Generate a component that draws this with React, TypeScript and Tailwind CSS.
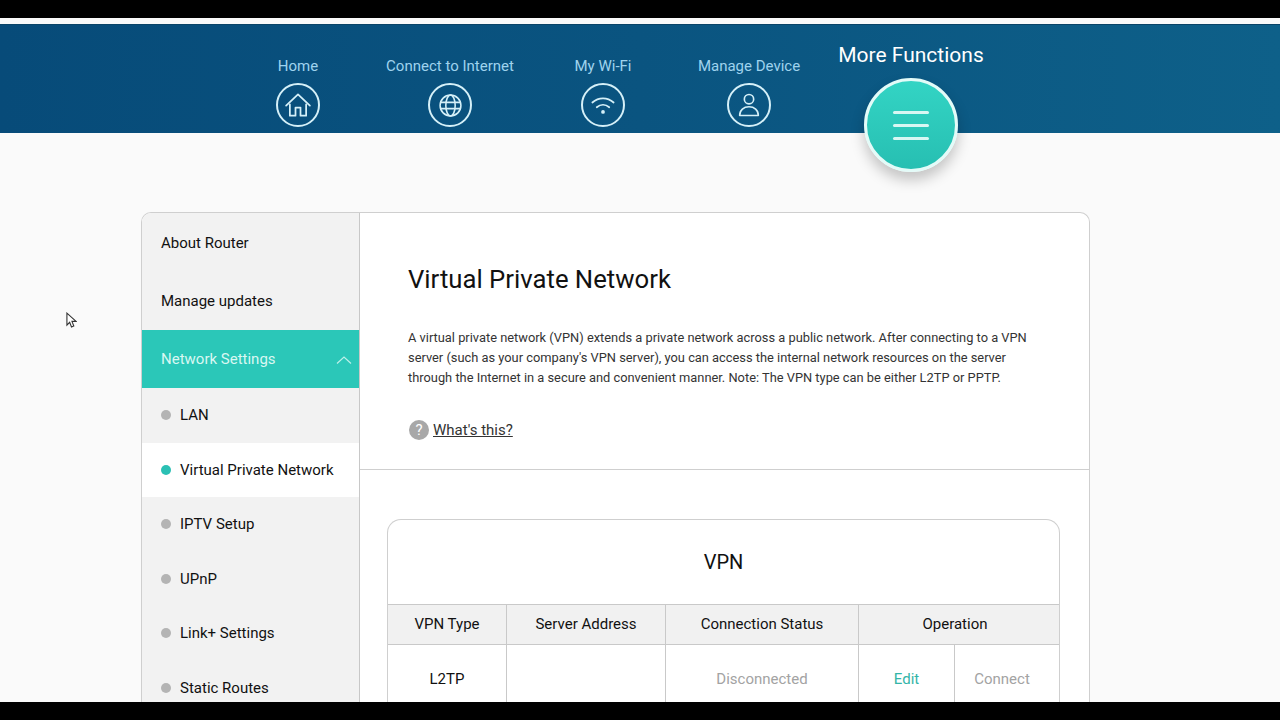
const font = { fontFamily: 'Roboto, "Noto Sans", sans-serif' };

function HomeIcon() {
    return (
        <svg viewBox="0 0 24 24" className="w-[30px] h-[30px]" fill="none" stroke="currentColor" strokeWidth="1.4" strokeLinejoin="round" strokeLinecap="round">
            <path d="M2.5 12.5 12 3.500l9.500 9" />
            <path d="M5.500 11.500V20.500h4.500v-6.500h4v6.500h4.500V11.500" />
        </svg>
    );
}

function GlobeIcon() {
    return (
        <svg viewBox="0 0 24 24" className="w-[25px] h-[25px]" fill="none" stroke="currentColor" strokeWidth="1.5">
            <circle cx="12" cy="12" r="10" />
            <ellipse cx="12" cy="12" rx="4.500" ry="10" />
            <path d="M2 9h20M2 15h20" />
        </svg>
    );
}

function WifiIcon() {
    return (
        <svg viewBox="0 0 24 24" className="w-[30px] h-[30px]" fill="none" stroke="currentColor" strokeWidth="1.400" strokeLinecap="round">
            <path d="M3.500 10c5-4.500 12-4.500 17 0" />
            <path d="M7 13.800c3-2.600 7-2.600 10 0" />
            <circle cx="12" cy="17.500" r="1.500" fill="currentColor" stroke="none" />
        </svg>
    );
}

function UserIcon() {
    return (
        <svg viewBox="0 0 24 24" className="w-[28px] h-[28px]" fill="none" stroke="currentColor" strokeWidth="1.400" strokeLinejoin="round">
            <circle cx="12" cy="7" r="4" />
            <path d="M4 21c0-4.800 3.500-7.500 8-7.500s8 2.700 8 7.500z" />
        </svg>
    );
}

function NavItem({ label, width, icon }: { label: string; width: string; icon: React.ReactNode }) {
    return (
        <div className={`flex flex-col items-center pt-[31px] ${width}`}>
            <span className="text-[15px] leading-[20px] text-[#9fd3ee] whitespace-nowrap">{label}</span>
            <div className="mt-[7px] w-[44px] h-[44px] rounded-full border-2 border-[#d5f0f8] text-[#d5f0f8] flex items-center justify-center">
                {icon}
            </div>
        </div>
    );
}

const subItems = ['LAN', 'Virtual Private Network', 'IPTV Setup', 'UPnP', 'Link+ Settings', 'Static Routes'];

function Sidebar() {
    return (
        <div className="w-[218px] shrink-0 bg-[#f2f2f2] border-r border-[#c8c8c8] text-[15px] text-[#111]">
            <div className="h-[59px] pl-[19px] pt-px flex items-center">About Router</div>
            <div className="h-[58px] pl-[19px] flex items-center">Manage updates</div>
            <div className="h-[58px] pl-[19px] pr-[7px] pt-px flex items-center justify-between bg-[#2bc7b8] text-[#d9f7f2]">
                <span>Network Settings</span>
                <svg viewBox="0 0 16 8" className="w-[16px] h-[8px]" fill="none" stroke="#bdf0e9" strokeWidth="1.200">
                    <path d="M1 7.500 8 1l7 6.500" />
                </svg>
            </div>
            {subItems.map((item, i) => (
                <div key={item} className={`h-[54.500px] pl-[19px] flex items-center gap-[9px] ${i === 1 ? 'bg-white' : ''}`}>
                    <span className={`w-[10px] h-[10px] rounded-full ${i === 1 ? 'bg-[#2bc0b4]' : 'bg-[#b4b4b4]'}`} />
                    <span>{item}</span>
                </div>
            ))}
        </div>
    );
}

function VpnTable() {
    return (
        <div className="mt-[49px] ml-[27px] mr-[29px] border border-b-0 border-[#cfcfcf] rounded-t-[14px] text-[15px] text-[#111]">
            <div className="h-[84px] flex items-center justify-center text-[20px]">VPN</div>
            <div className="flex h-[41px] bg-[#f1f1f1] border-y border-[#c9c9c9]">
                <div className="w-[119px] flex items-center justify-center border-r border-[#c9c9c9]">VPN Type</div>
                <div className="w-[159px] flex items-center justify-center border-r border-[#c9c9c9]">Server Address</div>
                <div className="w-[193px] flex items-center justify-center border-r border-[#c9c9c9]">Connection Status</div>
                <div className="flex-1 pr-[8px] flex items-center justify-center">Operation</div>
            </div>
            <div className="flex h-[68px]">
                <div className="w-[119px] flex items-center justify-center border-r border-[#c9c9c9]">L2TP</div>
                <div className="w-[159px] border-r border-[#c9c9c9]" />
                <div className="w-[193px] flex items-center justify-center border-r border-[#c9c9c9] text-[#a3a3a3]">Disconnected</div>
                <div className="w-[96px] flex items-center justify-center border-r border-[#c9c9c9] text-[#33b5a8]">Edit</div>
                <div className="flex-1 pr-[10px] flex items-center justify-center text-[#a3a3a3]">Connect</div>
            </div>
        </div>
    );
}

export default function App() {
    return (
        <div className="h-screen flex flex-col bg-black overflow-hidden" style={font}>
            <div className="h-[18px] shrink-0 bg-black" />
            <div className="flex-1 min-h-0 overflow-hidden bg-[#fafafa] pt-[6px] relative">
                <div className="h-[109px] flex pl-[222px] border-t border-[#0a4468] bg-[linear-gradient(90deg,#074b79_0%,#0a5480_50%,#0e6089_100%)]">
                    <NavItem label="Home" width="w-[152px]" icon={<HomeIcon />} />
                    <NavItem label="Connect to Internet" width="w-[152px]" icon={<GlobeIcon />} />
                    <NavItem label="My Wi-Fi" width="w-[154px]" icon={<WifiIcon />} />
                    <NavItem label="Manage Device" width="w-[138px]" icon={<UserIcon />} />
                    <div className="w-[186px] flex flex-col items-center pt-[17px]">
                        <span className="text-[21px] leading-[27px] text-white whitespace-nowrap">More Functions</span>
                        <div className="mt-[9px] w-[94px] h-[94px] shrink-0 rounded-full border-[3px] border-[#e3fbf8] bg-[linear-gradient(180deg,#33d4c4,#27bfb2)] shadow-[0_8px_14px_rgba(0,0,0,0.22)] flex flex-col items-center justify-center gap-[10px]">
                            <span className="w-[36px] h-[3px] rounded-full bg-[#d8f7f3]" />
                            <span className="w-[36px] h-[3px] rounded-full bg-[#d8f7f3]" />
                            <span className="w-[36px] h-[3px] rounded-full bg-[#d8f7f3]" />
                        </div>
                    </div>
                </div>

                {/* mouse pointer from the recording */}
                <svg viewBox="0 0 12 18" className="absolute left-[66px] top-[294px] w-[11px] h-[17px]" fill="#fff" stroke="#333" strokeWidth="1.200">
                    <path d="M1 1v13l3-3 2 5 2.500-1-2-5h4.500z" />
                </svg>

                <div className="mt-[79px] ml-[141px] w-[949px] flex items-stretch border border-b-0 border-[#cfcfcf] rounded-t-[10px] overflow-hidden bg-white">
                    <Sidebar />
                    <div className="flex-1 min-w-0">
                        <div className="h-[257px] border-b border-[#cfcfcf] pl-[48px] pr-[40px] pt-[48px]">
                            <h1 className="text-[25.700px] leading-[36px] text-[#111]">Virtual Private Network</h1>
                            <p className="mt-[31px] text-[12.850px] leading-[20px] text-[#333]">
                                A virtual private network (VPN) extends a private network across a public network. After connecting to a VPN server (such as your company's VPN server), you can access the internal network resources on the server through the Internet in a secure and convenient manner. Note: The VPN type can be either L2TP or PPTP.
                            </p>
                            <div className="mt-[31px] ml-px flex items-center gap-[4px]">
                                <span className="w-[20px] h-[20px] rounded-full bg-[#a8a8a8] text-white text-[15px] flex items-center justify-center">?</span>
                                <span className="text-[15px] text-[#333] underline">What's this?</span>
                            </div>
                        </div>
                        <VpnTable />
                    </div>
                </div>
            </div>
            <div className="h-[18px] shrink-0 bg-black" />
        </div>
    );
}
